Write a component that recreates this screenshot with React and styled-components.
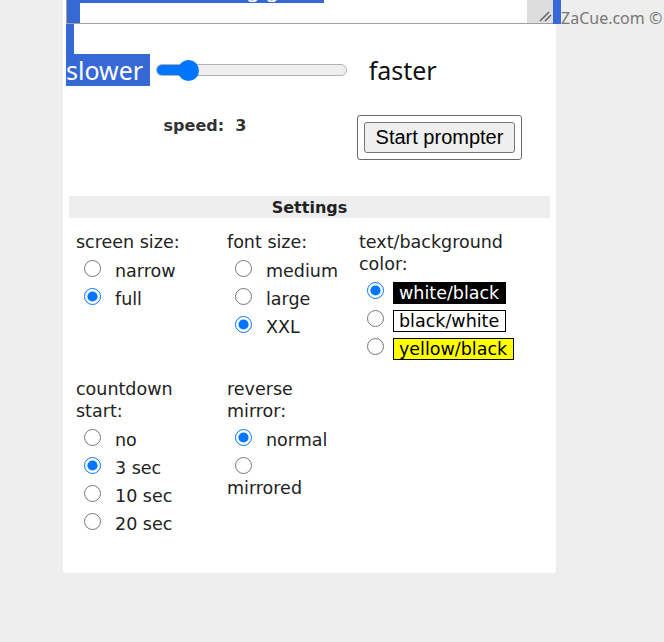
import styled, { createGlobalStyle } from 'styled-components';

const GlobalStyle = createGlobalStyle`
  html, body {
    margin: 0;
    padding: 0;
    background: #eeeeee;
    overflow: hidden;
  }
  body {
    font-family: "DejaVu Sans", Verdana, sans-serif;
    color: #222;
  }
`;

const SELECTION = '#3668d6';

const Page = styled.div`
  height: 642px;
  padding-left: 63px;
`;

const Panel = styled.div`
  box-sizing: border-box;
  width: 493px;
  height: 625px;
  margin-top: -52px;
  padding: 0 3px;
  background: #fff;
  border-radius: 0 0 3px 3px;
`;

const ScriptRow = styled.div`
  display: flex;
  align-items: flex-end;
  white-space: nowrap;
`;

const ScriptBox = styled.div`
  box-sizing: border-box;
  flex-shrink: 0;
  display: flex;
  width: 487px;
  height: 76px;
  border: 1px solid #a0a0a0;
  border-right: none;
  overflow: hidden;
  background: #fff;
`;

const ScriptText = styled.div`
  flex: 1;
  padding-top: 26px;
  font-family: "Noto Sans", sans-serif;
  font-size: 22px;
  line-height: 26px;
  color: #000;
`;

const ScriptLine = styled.div`
  height: 26px;
`;

const Selected = styled.span`
  background: ${SELECTION};
  color: #fff;
`;

const SelectedBlank = styled.span`
  flex-shrink: 0;
  display: inline-block;
  vertical-align: top;
  width: ${(p) => p.$w}px;
  height: ${(p) => p.$h}px;
  background: ${SELECTION};
`;

const ScrollTrack = styled.div`
  display: flex;
  flex-direction: column;
  justify-content: flex-end;
  align-items: flex-end;
  width: 26px;
  background: #dddddd;
`;

const Credit = styled.span`
  flex-shrink: 0;
  margin-bottom: -2px;
  font-family: "Noto Sans", sans-serif;
  font-size: 16px;
  line-height: 16px;
  color: #777;
`;

const BlankLine = styled.div`
  height: 30px;
`;

const SpeedRow = styled.div`
  display: flex;
  align-items: center;
  height: 32px;
  font-family: "Noto Sans", sans-serif;
  font-size: 25px;
  line-height: 32px;
  white-space: pre;
`;

const SlowerText = styled.span`
  background: ${SELECTION};
  color: #fff;
`;

const FasterText = styled.span`
  margin-left: 22px;
  color: #111;
`;

const Slider = styled.input`
  -webkit-appearance: none;
  appearance: none;
  width: 191px;
  height: 21px;
  margin: 0 0 0 6px;
  background: transparent;

  &::-webkit-slider-runnable-track {
    box-sizing: border-box;
    height: 12px;
    border: 1px solid #b2b2b2;
    border-radius: 6px;
    background: linear-gradient(
      to right,
      #0075ff 0,
      #0075ff ${(p) => p.$fill}px,
      #efefef ${(p) => p.$fill}px
    );
  }

  &::-webkit-slider-thumb {
    -webkit-appearance: none;
    width: 21px;
    height: 21px;
    margin-top: -5.5px;
    border: none;
    border-radius: 50%;
    background: #0075ff;
  }
`;

const ControlGrid = styled.div`
  display: grid;
  grid-template-columns: 278px auto;
  column-gap: 13px;
  align-items: start;
  margin-top: 29px;
`;

const SpeedLabel = styled.div`
  padding-top: 1px;
  text-align: center;
  font-weight: bold;
  font-size: 16px;
  line-height: 19px;
  color: #333;
  white-space: pre;
`;

const ButtonFrame = styled.div`
  justify-self: start;
  padding: 6px;
  border: 1px solid #6b6b6b;
  border-radius: 3px;
`;

const StartButton = styled.button`
  box-sizing: border-box;
  display: block;
  width: 151px;
  height: 31px;
  padding: 0 6px;
  border: 1px solid #767676;
  border-radius: 3px;
  background: #efefef;
  font-family: "Liberation Sans", Arial, sans-serif;
  font-size: 20px;
  color: #000;
`;

const SettingsBar = styled.div`
  box-sizing: border-box;
  margin: 36px 3px 0;
  height: 22px;
  padding-top: 2px;
  background: #eeeeee;
  text-align: center;
  font-weight: bold;
  font-size: 16px;
  line-height: 20px;
  color: #222;
`;

const SettingsGrid = styled.div`
  display: grid;
  grid-template-columns: 131px 112px 1fr;
  column-gap: 20px;
  row-gap: 19px;
  margin-top: 13px;
  padding-left: 10px;
  font-size: 17.5px;
`;

const Group = styled.div``;

const GroupTitle = styled.div`
  line-height: 22px;
`;

const Option = styled.label`
  display: block;
  line-height: 20px;
  white-space: nowrap;
`;

const Radio = styled.input`
  width: 17px;
  height: 17px;
  margin: 7px ${(p) => (p.$tight ? 9 : 14)}px 0 8px;
  vertical-align: baseline;
  accent-color: #0075ff;
`;

const Swatch = styled.span`
  padding: 0 6px 0 5px;
  border: 1px solid #000;
  background: ${(p) => p.$bg};
  color: ${(p) => p.$fg};
`;

function Grip() {
  return (
    <svg width="16" height="14" viewBox="0 0 16 14">
      <line x1="3" y1="12" x2="12" y2="3" stroke="#555" strokeWidth="1.3" />
      <line x1="8" y1="12" x2="14" y2="6" stroke="#555" strokeWidth="1.3" />
    </svg>
  );
}

function RadioGroup({ title, name, options, checked }) {
  return (
    <Group>
      <GroupTitle>{title}</GroupTitle>
      {options.map((opt) => (
        <Option key={opt.label}>
          <Radio
            type="radio"
            name={name}
            defaultChecked={opt.label === checked}
            $tight={!!opt.swatch}
          />
          {opt.breakBefore && <br />}
          {opt.swatch ? (
            <Swatch $bg={opt.swatch.bg} $fg={opt.swatch.fg}>
              {opt.label}
            </Swatch>
          ) : (
            opt.label
          )}
        </Option>
      ))}
    </Group>
  );
}

const SPEED_MIN = 1;
const SPEED_MAX = 17;

export default function App() {
  const speed = 3;
  const trackWidth = 191;
  const thumb = 21;
  const fill =
    ((speed - SPEED_MIN) / (SPEED_MAX - SPEED_MIN)) * (trackWidth - thumb) +
    thumb / 2;

  return (
    <>
      <GlobalStyle />
      <Page>
        <Panel>
          <ScriptRow>
            <ScriptBox>
              <ScriptText>
                <ScriptLine>
                  <Selected>Let's watch the big game</Selected>
                </ScriptLine>
                <ScriptLine>
                  <SelectedBlank $w={13} $h={26} />
                </ScriptLine>
              </ScriptText>
              <ScrollTrack>
                <Grip />
              </ScrollTrack>
            </ScriptBox>
            <SelectedBlank $w={8} $h={24} />
            <Credit>ZaCue.com ©</Credit>
          </ScriptRow>

          <BlankLine>
            <SelectedBlank $w={8} $h={30} />
          </BlankLine>

          <SpeedRow>
            <SlowerText>slower </SlowerText>
            <Slider
              type="range"
              min={SPEED_MIN}
              max={SPEED_MAX}
              defaultValue={speed}
              $fill={fill}
            />
            <FasterText>faster</FasterText>
          </SpeedRow>

          <ControlGrid>
            <SpeedLabel>{`speed:  ${speed}`}</SpeedLabel>
            <ButtonFrame>
              <StartButton type="button">Start prompter</StartButton>
            </ButtonFrame>
          </ControlGrid>

          <SettingsBar>Settings</SettingsBar>

          <SettingsGrid>
            <RadioGroup
              title="screen size:"
              name="screen"
              checked="full"
              options={[{ label: 'narrow' }, { label: 'full' }]}
            />
            <RadioGroup
              title="font size:"
              name="font"
              checked="XXL"
              options={[{ label: 'medium' }, { label: 'large' }, { label: 'XXL' }]}
            />
            <RadioGroup
              title="text/background color:"
              name="colors"
              checked="white/black"
              options={[
                { label: 'white/black', swatch: { bg: '#000', fg: '#fff' } },
                { label: 'black/white', swatch: { bg: '#fff', fg: '#000' } },
                { label: 'yellow/black', swatch: { bg: '#ffff00', fg: '#000' } },
              ]}
            />
            <RadioGroup
              title="countdown start:"
              name="countdown"
              checked="3 sec"
              options={[
                { label: 'no' },
                { label: '3 sec' },
                { label: '10 sec' },
                { label: '20 sec' },
              ]}
            />
            <RadioGroup
              title="reverse mirror:"
              name="mirror"
              checked="normal"
              options={[{ label: 'normal' }, { label: 'mirrored', breakBefore: true }]}
            />
          </SettingsGrid>
        </Panel>
      </Page>
    </>
  );
}
